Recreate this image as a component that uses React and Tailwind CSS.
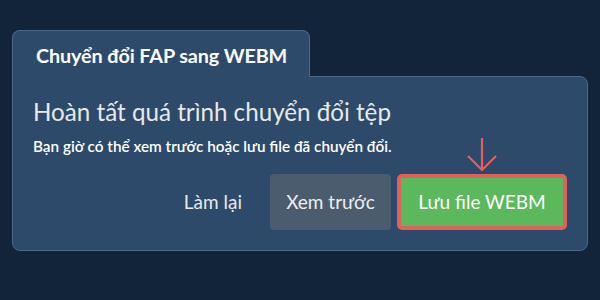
export default function App() {
  return (
    <div
      className="w-[600px] h-[300px] bg-[#12243a] pt-[30px] px-[12px]"
      style={{ fontFamily: 'Lato, "Noto Sans", sans-serif' }}
    >
      {/* Tab */}
      <div className="relative z-10 w-[298px] h-[47px] -mb-px rounded-t-[8px] border border-b-0 border-[#4d6889] bg-[#2d4a6a] flex items-center pt-[4px] pl-[23px]">
        <span className="text-white font-bold text-[19.8px] tracking-[-0.1px]">Chuyển đổi FAP sang WEBM</span>
      </div>

      {/* Panel */}
      <div className="w-[576px] h-[175px] rounded-b-[8px] rounded-tr-[8px] border border-[#4d6889] bg-[#2d4a6a] px-[20px] pt-[20px]">
        <h1 className="text-[#e8e8e8] text-[24.2px] leading-[30px]">Hoàn tất quá trình chuyển đổi tệp</h1>
        <p className="mt-[9px] text-white font-semibold text-[15.3px] leading-[20px]">
          Bạn giờ có thể xem trước hoặc lưu file đã chuyển đổi.
        </p>

        <div className="mt-[18px] flex items-center justify-end gap-[6px]">
          <button className="h-[56px] px-[22px] text-[#e8e8e8] text-[19px]">Làm lại</button>
          <button className="h-[56px] w-[121px] rounded-[4px] bg-[#4b5c6e] text-[#eeeeee] text-[19px]">
            Xem trước
          </button>
          <div className="relative">
            {/* arrow */}
            <svg
              className="absolute left-1/2 -translate-x-1/2 -top-[37px]"
              width="32"
              height="36"
              viewBox="0 0 32 36"
              fill="none"
              stroke="#e2605e"
              strokeWidth="2.2"
            >
              <path d="M16 1 L16 33" />
              <path d="M2 19 L16 33 L30 19" />
            </svg>
            <button className="h-[56px] w-[170px] rounded-[5px] border-[4px] border-[#e0605c] bg-[#5cb85c] text-white text-[19px]">
              Lưu file WEBM
            </button>
          </div>
        </div>
      </div>
    </div>
  );
}
